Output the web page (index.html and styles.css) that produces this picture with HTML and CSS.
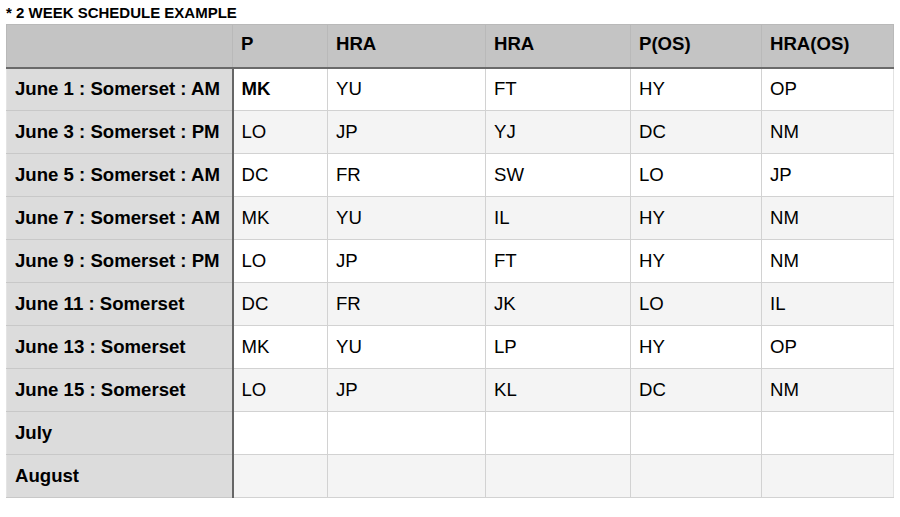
FILE: index.html
```html
<!DOCTYPE html>
<html>
<head>
<meta charset="utf-8">
<link rel="stylesheet" href="styles.css">
</head>
<body>
<div class="page">
  <div class="title">* 2 WEEK SCHEDULE EXAMPLE</div>
  <table class="sched">
    <colgroup>
      <col class="c0"><col class="c1"><col class="c2"><col class="c3"><col class="c4"><col class="c5">
    </colgroup>
    <thead>
      <tr><th class="corner"></th><th>P</th><th>HRA</th><th>HRA</th><th>P(OS)</th><th>HRA(OS)</th></tr>
    </thead>
    <tbody>
      <tr><th>June 1 : Somerset : AM</th><td class="b">MK</td><td>YU</td><td>FT</td><td>HY</td><td>OP</td></tr>
      <tr><th>June 3 : Somerset : PM</th><td>LO</td><td>JP</td><td>YJ</td><td>DC</td><td>NM</td></tr>
      <tr><th>June 5 : Somerset : AM</th><td>DC</td><td>FR</td><td>SW</td><td>LO</td><td>JP</td></tr>
      <tr><th>June 7 : Somerset : AM</th><td>MK</td><td>YU</td><td>IL</td><td>HY</td><td>NM</td></tr>
      <tr><th>June 9 : Somerset : PM</th><td>LO</td><td>JP</td><td>FT</td><td>HY</td><td>NM</td></tr>
      <tr><th>June 11 : Somerset</th><td>DC</td><td>FR</td><td>JK</td><td>LO</td><td>IL</td></tr>
      <tr><th>June 13 : Somerset</th><td>MK</td><td>YU</td><td>LP</td><td>HY</td><td>OP</td></tr>
      <tr><th>June 15 : Somerset</th><td>LO</td><td>JP</td><td>KL</td><td>DC</td><td>NM</td></tr>
      <tr><th>July</th><td></td><td></td><td></td><td></td><td></td></tr>
      <tr><th>August</th><td></td><td></td><td></td><td></td><td></td></tr>
    </tbody>
  </table>
</div>
</body>
</html>
```

FILE: styles.css
```css
html, body {
  margin: 0;
  padding: 0;
  background: #ffffff;
}
body {
  font-family: "Liberation Sans", Arial, sans-serif;
  color: #000;
}
.page {
  padding: 4px 7px 0 6px;
}
.title {
  font-size: 15px;
  font-weight: bold;
  line-height: 17px;
  height: 20px;
}
.sched {
  border-collapse: collapse;
  table-layout: fixed;
  width: 887px;
}
.c0 { width: 226px; }
.c1 { width: 95px; }
.c2 { width: 158px; }
.c3 { width: 145px; }
.c4 { width: 131px; }
.c5 { width: 132px; }
.sched th, .sched td {
  height: 43px;
  padding: 0 8px 1px;
  font-size: 18.6px;
  text-align: left;
  vertical-align: middle;
  border: 1px solid #d2d2d2;
  box-sizing: border-box;
  white-space: nowrap;
}
.sched thead th {
  background: #c4c4c4;
  font-weight: bold;
  border-color: #b9b9b9;
  border-bottom: 2px solid #6a6a6a;
  padding-bottom: 3px;
}
.sched tbody th {
  background: #dcdcdc;
  font-weight: bold;
  border-right: 2px solid #666666;
  border-color: #c8c8c8 #666666 #c8c8c8 #e4e4e4;
}
.sched tbody tr:nth-child(odd) td { background: #ffffff; }
.sched tbody tr:nth-child(even) td { background: #f4f4f4; }
.sched td.b { font-weight: bold; }
.sched tbody tr td:last-child { border-right-color: #e2e2e2; }
```
